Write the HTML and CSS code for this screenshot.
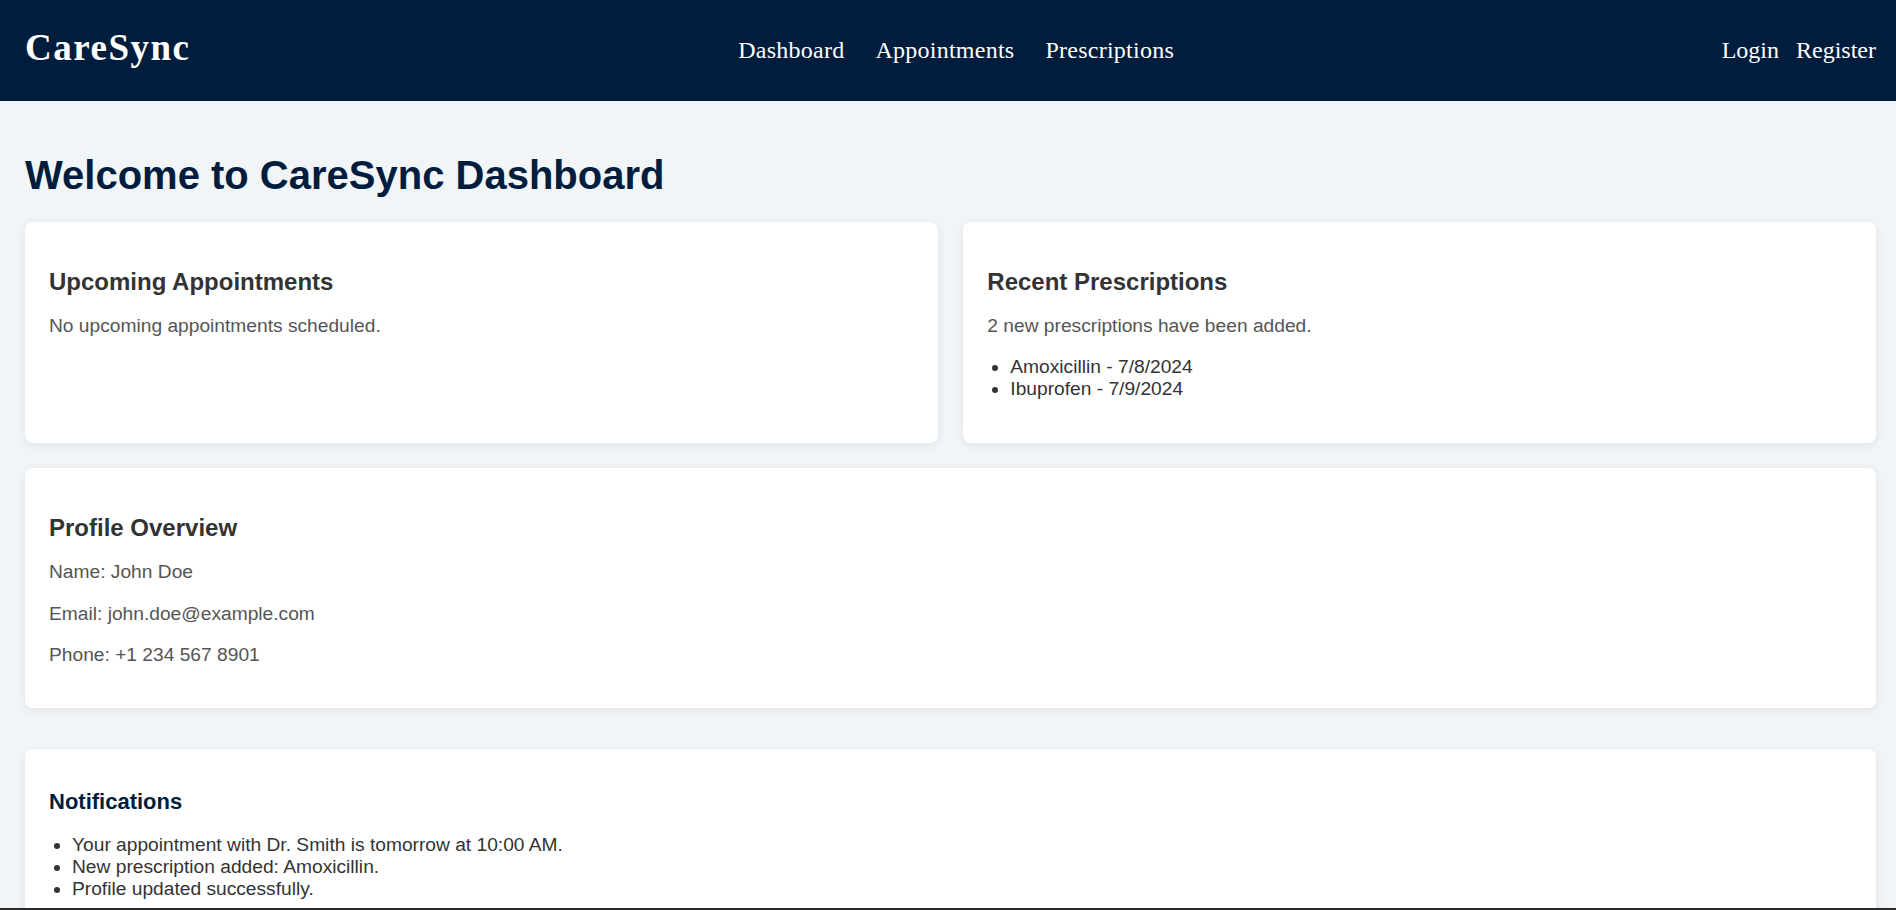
FILE: index.html
```html
<!DOCTYPE html>
<html lang="en">
<head>
<meta charset="utf-8">
<title>CareSync</title>
<link rel="stylesheet" href="styles.css">
</head>
<body>
<header class="topbar">
  <div class="logo">CareSync</div>
  <nav class="main-nav">
    <a href="#">Dashboard</a>
    <a href="#">Appointments</a>
    <a href="#">Prescriptions</a>
  </nav>
  <div class="auth">
    <a href="#">Login</a>
    <a href="#">Register</a>
  </div>
</header>
<main class="page">
  <h1 class="page-title">Welcome to CareSync Dashboard</h1>
  <div class="grid">
    <section class="card">
      <h3>Upcoming Appointments</h3>
      <p>No upcoming appointments scheduled.</p>
    </section>
    <section class="card">
      <h3>Recent Prescriptions</h3>
      <p>2 new prescriptions have been added.</p>
      <ul class="list">
        <li>Amoxicillin - 7/8/2024</li>
        <li>Ibuprofen - 7/9/2024</li>
      </ul>
    </section>
    <section class="card wide">
      <h3>Profile Overview</h3>
      <p>Name: John Doe</p>
      <p>Email: john.doe@example.com</p>
      <p>Phone: +1 234 567 8901</p>
    </section>
  </div>
  <section class="card notifications">
    <h3>Notifications</h3>
    <ul class="list">
      <li>Your appointment with Dr. Smith is tomorrow at 10:00 AM.</li>
      <li>New prescription added: Amoxicillin.</li>
      <li>Profile updated successfully.</li>
    </ul>
  </section>
</main>
<div class="frame-edge"></div>
</body>
</html>
```
FILE: styles.css
```css
html, body {
  margin: 0;
  padding: 0;
}
body {
  background: #f2f5f8;
  font-family: "Liberation Sans", Arial, sans-serif;
  font-size: 19.2px;
  color: #333;
  overflow: hidden;
}
.topbar {
  height: 101px;
  background: #001d3d;
  display: flex;
  align-items: center;
  justify-content: space-between;
  padding: 0 20px 0 25px;
  box-sizing: border-box;
}
.logo {
  font-family: "Liberation Serif", "Times New Roman", serif;
  font-weight: bold;
  font-size: 37px;
  letter-spacing: 1.5px;
  color: #fff;
  margin-bottom: 6px;
}
.main-nav, .auth {
  display: flex;
  align-items: center;
}
.main-nav { gap: 31px; }
.auth { gap: 17px; }
.main-nav a, .auth a {
  font-family: "Liberation Serif", "Times New Roman", serif;
  font-size: 24px;
  color: #fff;
  text-decoration: none;
}
.main-nav a { letter-spacing: 0.25px; }
.page {
  padding: 22px 20px 0 25px;
}
.page-title {
  font-size: 40px;
  font-weight: bold;
  color: #001d3d;
  margin: 30px 0 24px 0;
}
.grid {
  display: grid;
  grid-template-columns: 1fr 1fr;
  gap: 25.6px;
}
.wide {
  grid-column: 1 / -1;
}
.card {
  background: #fff;
  border-radius: 8px;
  box-shadow: 0 2px 10px rgba(0, 0, 0, 0.08);
  padding: 24px 24px 23px;
}
.card h3 {
  font-size: 24px;
  font-weight: bold;
  color: #333;
  margin: 22px 0 19px;
}
.card p {
  color: #555;
  margin: 19.2px 0;
}
.list {
  margin: 19.2px 0;
  padding-left: 23px;
  color: #333;
}
.notifications {
  margin-top: 41px;
  padding: 20px 24px;
}
.notifications h3 {
  font-size: 22px;
  color: #001d3d;
  margin: 20px 0 19px;
}
.frame-edge {
  position: fixed;
  left: 0;
  right: 0;
  bottom: 0;
  height: 2px;
  background: #2a2a2a;
}
```
